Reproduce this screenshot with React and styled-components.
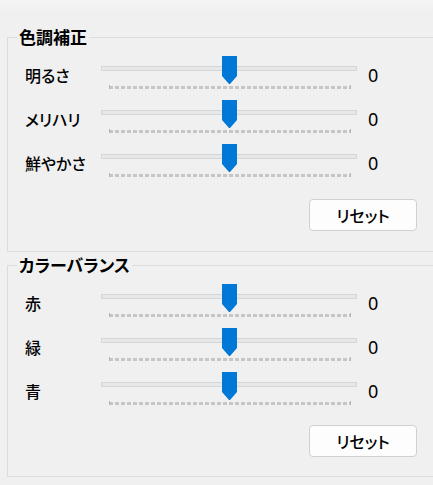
import React from "react";
import styled, { createGlobalStyle } from "styled-components";

// ================= STYLES =================

const GlobalStyle = createGlobalStyle`
  html, body {
    margin: 0;
    padding: 0;
    background: #f0f0f0;
    overflow: hidden;
  }
  body {
    font-family: "Noto Sans CJK JP", "Noto Sans", sans-serif;
    font-feature-settings: "palt";
    color: #000;
  }
`;

const Page = styled.div`
  width: 433px;
  height: 485px;
  padding-top: 27px;
  box-sizing: border-box;
  background: linear-gradient(#f5f5f5 0px, #f0f0f0 12px, #f0f0f0 100%);
  overflow: hidden;
`;

const Group = styled.fieldset`
  box-sizing: border-box;
  width: 436px;
  margin: ${(p) => p.$top}px 0 0 7px;
  padding: 9px 25px ${(p) => p.$bottom}px 17px;
  border: 1px solid #dcdcdc;
  min-width: 0;
`;

const Title = styled.legend`
  margin-left: -8px;
  padding: 0 2px;
  font-size: 17px;
  font-weight: 700;
  line-height: 20px;
`;

const Rows = styled.div`
  display: grid;
  grid-template-columns: 76px 256px auto;
  row-gap: 10px;
`;

const Label = styled.div`
  font-size: 16px;
  font-weight: 500;
  line-height: 20px;
  padding-top: 9px;
`;

const Value = styled.div`
  font-family: "Noto Sans", sans-serif;
  font-size: 18px;
  line-height: 20px;
  padding-top: 9px;
  margin-left: 11px;
`;

const Slider = styled.div`
  position: relative;
  height: 34px;
`;

const Track = styled.div`
  position: absolute;
  left: 0;
  right: 0;
  top: 10px;
  height: 5px;
  box-sizing: border-box;
  background: #e6e7e7;
  border: 1px solid #d6d6d6;
`;

const Ticks = styled.div`
  position: absolute;
  left: 8px;
  right: 6px;
  top: 30px;
  height: 3px;
  background: repeating-linear-gradient(
    90deg,
    #c6c6c6 0 4px,
    transparent 4px 6px
  );

  &::before,
  &::after {
    content: "";
    position: absolute;
    top: -1px;
    width: 1px;
    height: 4px;
    background: #b4b4b4;
  }
  &::before {
    left: 0;
  }
  &::after {
    right: 0;
  }
`;

const Thumb = styled.svg`
  position: absolute;
  top: 0;
  width: 15px;
  height: 28px;
  display: block;
`;

const ButtonRow = styled.div`
  display: flex;
  justify-content: flex-end;
  margin-top: ${(p) => p.$top}px;
`;

const Button = styled.button`
  width: 108px;
  height: 32px;
  box-sizing: border-box;
  background: #fdfdfd;
  border: 1px solid #d0d0d0;
  border-radius: 4px;
  font-family: "Noto Sans CJK JP", sans-serif;
  font-feature-settings: "palt";
  font-size: 16px;
  font-weight: 500;
  color: #000;
  padding: 0;
  cursor: pointer;
`;

// ================= COMPONENT =================

const groups = [
  {
    title: "色調補正",
    items: ["明るさ", "メリハリ", "鮮やかさ"],
    margin: 0,
    top: 21,
    bottom: 20,
  },
  {
    title: "カラーバランス",
    items: ["赤", "緑", "青"],
    margin: 3,
    top: 19,
    bottom: 19,
  },
];

const MIN = -100;
const MAX = 100;

function Slide({ value }) {
  const ratio = (value - MIN) / (MAX - MIN);
  const left = 8 + ratio * (256 - 16) - 7.5;
  return (
    <Slider>
      <Track />
      <Ticks />
      <Thumb viewBox="0 0 15 28" style={{ left }}>
        <polygon points="0,0 15,0 15,20 8,28 7,28 0,20" fill="#0078d7" />
      </Thumb>
    </Slider>
  );
}

export default function App() {
  return (
    <Page>
      <GlobalStyle />
      {groups.map((g) => (
        <Group key={g.title} $top={g.margin} $bottom={g.bottom}>
          <Title>{g.title}</Title>
          <Rows>
            {g.items.map((name) => (
              <React.Fragment key={name}>
                <Label>{name}</Label>
                <Slide value={0} />
                <Value>0</Value>
              </React.Fragment>
            ))}
          </Rows>
          <ButtonRow $top={g.top}>
            <Button>リセット</Button>
          </ButtonRow>
        </Group>
      ))}
      <Group $top={6} $bottom={20}>
        <Title>プレビュー</Title>
      </Group>
    </Page>
  );
}
